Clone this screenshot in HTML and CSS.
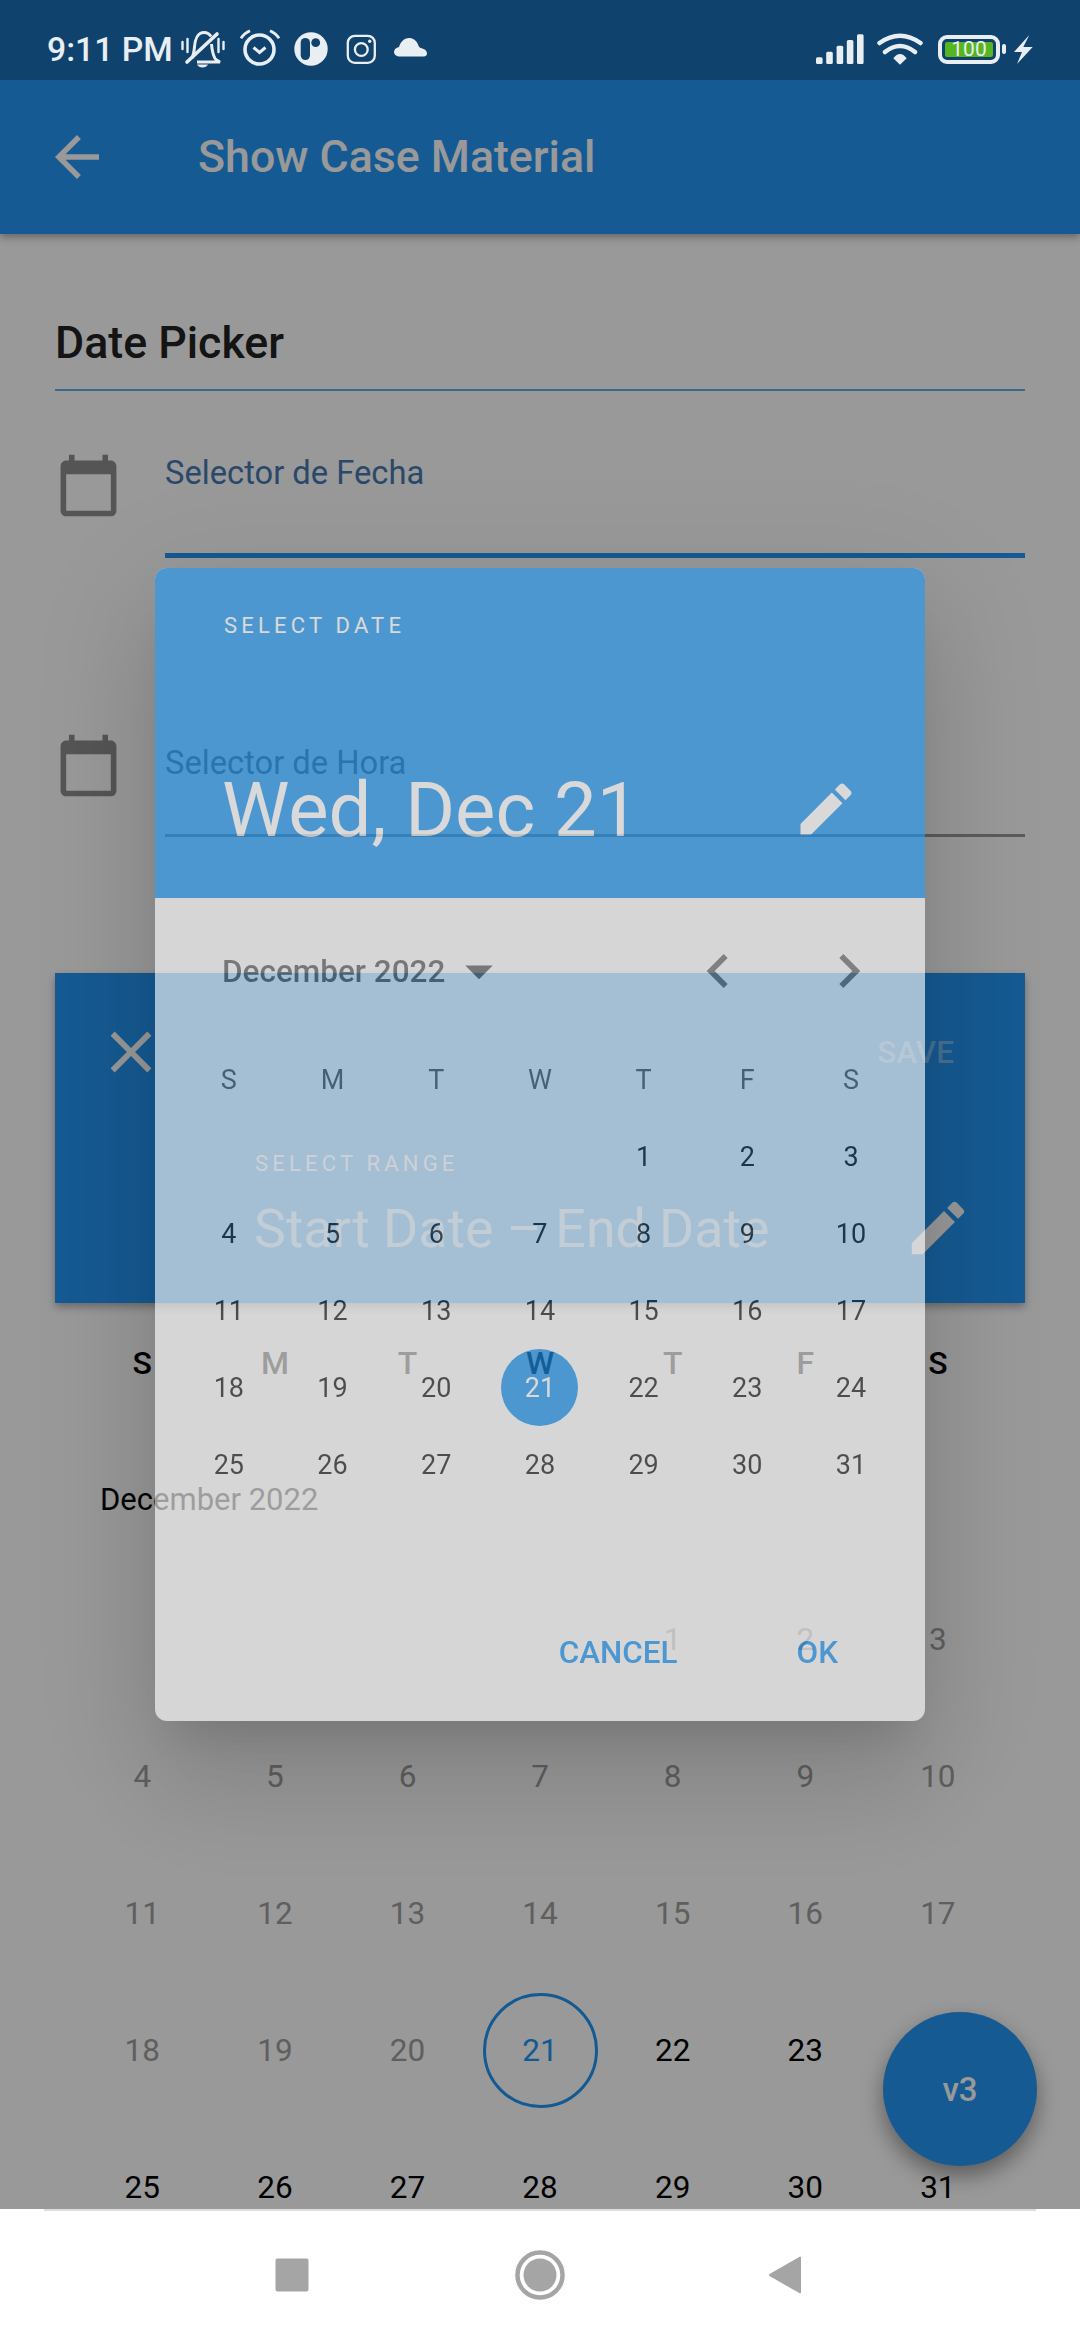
FILE: index.html
```html
<!DOCTYPE html>
<html lang="en">
<head>
<meta charset="utf-8">
<title>Show Case Material</title>
<link rel="stylesheet" href="styles.css">
</head>
<body>
<div class="screen">
  <div class="main">
    <div class="status">
      <span class="time">9:11 PM</span>
      <svg class="si bell" viewBox="0 0 44 38" fill="none" stroke="#e9eef2"><path d="M11 28c1.500-3 2-6 2.500-11C14 9 17 2.500 23 2.500c3 0 5.500 1.500 7 4" stroke-width="3"/><path d="M30.500 14c.5 6 1 10 3.500 14.500 1 1.500 3 2.500 5 3.500H16" stroke-width="3"/><path d="M6 32 36 4" stroke-width="3.600" stroke-linecap="round"/><path d="M1.500 12v7M6.500 9v13M37.500 9v13M42.500 12v7" stroke-width="2.400" stroke-linecap="round"/><path d="M16 34.500h11c-1 2-3 3-5.500 3s-4.500-1-5.500-3z" fill="#e9eef2" stroke="none"/></svg>
      <svg class="si alarm" viewBox="0 0 40 40" fill="none" stroke="#e9eef2"><circle cx="19.500" cy="20.500" r="14.500" stroke-width="3.600"/><path d="M13.500 18.500l6 5 6-5" stroke-width="3"/><path d="M1 9.300C3 6 6 3.500 10 1.700M30 1.700C34 3.500 37 6 39 9.300" stroke-width="2.800"/></svg>
      <svg class="si pcirc" viewBox="0 0 34 34"><circle cx="17" cy="17" r="16.700" fill="#e9eef2"/><rect x="6.700" y="6" width="9.300" height="22" rx="4.650" fill="#10426e"/><circle cx="21.700" cy="10.700" r="4.400" fill="#10426e"/></svg>
      <svg class="si insta" viewBox="0 0 31 31" fill="none" stroke="#e9eef2" stroke-width="2.300"><rect x="1.800" y="1.800" width="27" height="27" rx="7"/><circle cx="15.300" cy="15.500" r="6.400"/><circle cx="23.700" cy="7.200" r="1.700" fill="#e9eef2" stroke="none"/></svg>
      <svg class="si cloud" viewBox="0 0 33 19"><path d="M6 18.500C2.500 18.500 0 16.500 0 14s2-4.500 5-5C6.500 4 10 0 15 0c4 0 7.500 2.500 9 6.500.5 1.500 1 2.500 2.500 3.500 3.500.5 6.500 2.500 6.500 5.500 0 2-1.500 3-3 3z" fill="#e9eef2"/></svg>
      <span class="status-gap"></span>
      <svg class="si signal" viewBox="0 0 48 30" fill="#e9eef2"><rect x="0" y="23.300" width="6.600" height="6.700" rx="1.500"/><rect x="10.200" y="17.700" width="6.600" height="12.300" rx="1.500"/><rect x="20.600" y="11.700" width="6.600" height="18.300" rx="1.500"/><rect x="30.800" y="6" width="6.600" height="24" rx="1.500"/><rect x="41" y=".3" width="6.600" height="29.700" rx="1.500"/></svg>
      <svg class="si wifi" viewBox="0 0 46 34" fill="none" stroke="#e9eef2" stroke-width="4.500" stroke-linecap="round"><path d="M2.500 11Q23-3.600 43.500 11M8 20Q23 8 38 20"/><path d="M16.300 26.300Q23 17.700 29.700 26.300L23 32.700z" fill="#e9eef2" stroke="none"/></svg>
      <span class="battery"><span class="level">100</span></span>
      <span class="tip"></span>
      <svg class="si bolt" viewBox="0 0 19 29"><path d="M15.300 0 0 17h8L3 29l15.700-17H9.300z" fill="#e9eef2"/></svg>
    </div>
    <header class="appbar">
      <svg class="ic arrow" viewBox="0 0 24 24"><path d="M20 11H7.830l5.590-5.590L12 4l-8 8 8 8 1.410-1.410L7.830 13H20v-2z"/></svg>
      <span class="apptitle">Show Case Material</span>
    </header>
    <section class="content">
      <h1 class="section-title">Date Picker</h1>
      <div class="field field-first">
        <svg class="ic cal" viewBox="0 0 24 24"><path d="M20 3h-1V1h-2v2H7V1H5v2H4c-1.100 0-2 .9-2 2v16c0 1.100.9 2 2 2h16c1.100 0 2-.9 2-2V5c0-1.100-.9-2-2-2zm0 18H4V8h16v13z"/></svg>
        <div class="input input-on">Selector de Fecha</div>
      </div>
      <div class="field field-second">
        <svg class="ic cal" viewBox="0 0 24 24"><path d="M20 3h-1V1h-2v2H7V1H5v2H4c-1.100 0-2 .9-2 2v16c0 1.100.9 2 2 2h16c1.100 0 2-.9 2-2V5c0-1.100-.9-2-2-2zm0 18H4V8h16v13z"/></svg>
        <div class="input">Selector de Hora</div>
      </div>
      <div class="card">
        <div class="card-top">
          <svg class="ic close" viewBox="0 0 24 24"><path d="M19 6.410 17.590 5 12 10.590 6.410 5 5 6.410 10.590 12 5 17.590 6.410 19 12 13.410 17.590 19 19 17.590 13.410 12z"/></svg>
          <span class="save">SAVE</span>
        </div>
        <div class="range-label">SELECT RANGE</div>
        <div class="range-row">
          <span class="range-text">Start Date – End Date</span>
          <svg class="ic pencil" viewBox="0 0 24 24"><path d="M3 17.250V21h3.750L17.810 9.940l-3.750-3.750L3 17.250zM20.710 7.040c.39-.39.39-1.020 0-1.410l-2.340-2.340c-.39-.39-1.020-.39-1.410 0l-1.830 1.830 3.750 3.750 1.830-1.830z"/></svg>
        </div>
      </div>
      <div class="week"><span>S</span><span>M</span><span>T</span><span>W</span><span>T</span><span>F</span><span>S</span></div>
      <div class="month">December 2022</div>
      <div class="days">
        <span></span><span></span><span></span><span></span><span class="past">1</span><span class="past">2</span><span class="past">3</span>
        <span class="past">4</span><span class="past">5</span><span class="past">6</span><span class="past">7</span><span class="past">8</span><span class="past">9</span><span class="past">10</span>
        <span class="past">11</span><span class="past">12</span><span class="past">13</span><span class="past">14</span><span class="past">15</span><span class="past">16</span><span class="past">17</span>
        <span class="past">18</span><span class="past">19</span><span class="past">20</span><span class="today"><i>21</i></span><span>22</span><span>23</span><span>24</span>
        <span>25</span><span>26</span><span>27</span><span>28</span><span>29</span><span>30</span><span>31</span>
      </div>
    </section>
    <div class="fab">v3</div>
    <div class="scrim"></div>
    <div class="dialog">
      <div class="dlg-head">
        <div class="dlg-label">SELECT DATE</div>
        <div class="dlg-date">
          <span class="dlg-big">Wed, Dec 21</span>
          <svg class="ic pencil dlg-pencil" viewBox="0 0 24 24"><path d="M3 17.250V21h3.750L17.810 9.940l-3.750-3.750L3 17.250zM20.710 7.040c.39-.39.39-1.020 0-1.410l-2.340-2.340c-.39-.39-1.020-.39-1.410 0l-1.830 1.830 3.750 3.750 1.830-1.830z"/></svg>
        </div>
      </div>
      <div class="dlg-body">
        <div class="dlg-month">
          <span class="dlg-month-name">December 2022</span>
          <svg class="ic drop" viewBox="0 0 24 24"><path d="M7 10l5 5 5-5z"/></svg>
          <span class="grow"></span>
          <svg class="ic chev" viewBox="0 0 24 24"><path d="M15.410 7.410 14 6l-6 6 6 6 1.410-1.410L10.830 12z"/></svg>
          <svg class="ic chev" viewBox="0 0 24 24"><path d="M10 6 8.590 7.410 13.170 12l-4.580 4.580L10 18l6-6z"/></svg>
        </div>
        <div class="dlg-grid">
          <b>S</b><b>M</b><b>T</b><b>W</b><b>T</b><b>F</b><b>S</b>
          <span></span><span></span><span></span><span></span><span>1</span><span>2</span><span>3</span>
          <span>4</span><span>5</span><span>6</span><span>7</span><span>8</span><span>9</span><span>10</span>
          <span>11</span><span>12</span><span>13</span><span>14</span><span>15</span><span>16</span><span>17</span>
          <span>18</span><span>19</span><span>20</span><span class="sel">21</span><span>22</span><span>23</span><span>24</span>
          <span>25</span><span>26</span><span>27</span><span>28</span><span>29</span><span>30</span><span>31</span>
        </div>
        <div class="dlg-actions"><span>CANCEL</span><span>OK</span></div>
      </div>
    </div>
  </div>
  <nav class="nav">
    <svg class="nav-ic" viewBox="0 0 50 50"><rect x="5.500" y="8.500" width="33" height="33" rx="2" fill="#a5a5a5"/></svg>
    <svg class="nav-ic" viewBox="0 0 50 50"><circle cx="25" cy="25" r="22.500" fill="none" stroke="#a5a5a5" stroke-width="4.500"/><circle cx="25" cy="25" r="16.500" fill="#a5a5a5"/></svg>
    <svg class="nav-ic" viewBox="0 0 50 50"><path d="M41 7.500v35a1 1 0 0 1-1.700.6L9.500 26a1.500 1.500 0 0 1 0-2L39.300 6.900A1 1 0 0 1 41 7.500z" fill="#a5a5a5"/></svg>
  </nav>
</div>
</body>
</html>
```
FILE: styles.css
```css
* { box-sizing: border-box; }
html, body { margin: 0; padding: 0; }
body { width: 1080px; height: 2340px; overflow: hidden; background: #fff; font-family: Roboto, "Noto Sans", sans-serif; }
.screen { width: 1080px; height: 2340px; display: flex; flex-direction: column; }
.main { position: relative; height: 2209px; overflow: hidden; background: #fff; }

.status { position: relative; z-index: 3; height: 80px; background: #10426e; display: flex; align-items: center; padding: 18px 0 0 47px; }
.time { color: #e9eef2; font-size: 33.700px; font-weight: 500; width: 134px; white-space: nowrap; }
.si { display: block; flex: none; }
.bell { width: 44px; height: 38px; }
.alarm { width: 40px; height: 40px; margin-left: 15px; }
.pcirc { width: 34px; height: 34px; margin-left: 14px; }
.insta { width: 31px; height: 31px; margin-left: 18px; }
.cloud { width: 33px; height: 19px; margin-left: 17px; margin-top: -3px; }
.status-gap { flex: 1; }
.signal { width: 48px; height: 30px; }
.wifi { width: 46px; height: 34px; margin-left: 13px; }
.battery { width: 62px; height: 29px; margin-left: 15px; border: 4px solid #e9eef2; border-radius: 9px; padding: 3px; }
.level { display: block; height: 15px; background: #56b520; border-radius: 2px; color: #e9eef2; font-size: 21px; line-height: 15px; text-align: center; }
.tip { width: 4px; height: 10px; margin-left: 2px; background: #e9eef2; border-radius: 2px; }
.bolt { width: 19px; height: 29px; margin-left: 8px; margin-right: 47px; }

.ic { display: block; flex: none; fill: currentColor; }

.appbar { height: 154px; background: #2396f6; display: flex; align-items: center; padding-left: 44px; box-shadow: 0 3px 8px rgba(0,0,0,.35); position: relative; color: #fff; }
.arrow { width: 66px; height: 66px; }
.apptitle { margin-left: 88px; font-size: 44.700px; font-weight: 500; }

.content { padding: 0 55px; }
.section-title { margin: 0; height: 157px; padding-top: 79px; font-size: 44.700px; line-height: 60px; font-weight: 500; color: #222; border-bottom: 2px solid #5fb0ee; }
.field { display: flex; }
.field .cal { width: 67px; height: 67px; margin: 0; color: #8e8e8e; }
.field-first { margin-top: 61px; height: 106px; }
.field-second { margin-top: 175px; height: 104px; }
.input { flex: 1; margin-left: 43px; font-size: 32.700px; line-height: 40px; color: #666; border-bottom: 3px solid #999; }
.field-first .input { padding-top: 1px; height: 106px; color: #467bb1; border-bottom: 5px solid #2396f6; }
.field-second .cal { margin-top: -1px; }
.field-second .input { padding-top: 10px; height: 104px; }

.card { margin-top: 136px; height: 330px; background: #2396f6; color: #fff; box-shadow: 0 4px 8px rgba(0,0,0,.3); }
.card-top { padding: 44px 71px 0 41px; display: flex; justify-content: space-between; align-items: center; }
.close { width: 70px; height: 70px; }
.save { font-size: 31.500px; font-weight: 500; color: rgba(255,255,255,.38); }
.range-label { margin: 67px 0 0 200px; font-size: 22px; line-height: 20px; letter-spacing: 4.200px; color: rgba(255,255,255,.8); }
.range-row { margin-top: 14px; height: 80px; padding: 0 52px 0 199px; display: flex; justify-content: space-between; align-items: center; }
.range-text { font-size: 53.700px; color: rgba(255,255,255,.6); }
.pencil { width: 70px; height: 70px; }

.week, .days { display: grid; grid-template-columns: repeat(7, 132.6px); padding-left: 21px; }
.week { margin-top: 30px; height: 60px; align-items: center; }
.week span { text-align: center; font-size: 32px; font-weight: 500; color: #000; }
.month { margin: 87px 0 0 45px; font-size: 31px; line-height: 40px; color: #000; }
.days { margin-top: 51px; grid-auto-rows: 137px; }
.days span { display: flex; align-items: center; justify-content: center; font-size: 31.500px; color: #000; }
.days .past { color: #9e9e9e; }
.days .today i { font-style: normal; width: 115px; height: 115px; display: flex; align-items: center; justify-content: center; border: 3px solid #2196f3; border-radius: 50%; color: #2196f3; }

.fab { position: absolute; z-index: 1; left: 883px; top: 2012px; width: 154px; height: 154px; border-radius: 50%; background: #2396f6; color: #fff; font-size: 33px; font-weight: 500; display: flex; align-items: center; justify-content: center; box-shadow: 0 10px 22px rgba(0,0,0,.4); }
.scrim { position: absolute; z-index: 2; inset: 0; background: rgba(0,0,0,.4); }

.dialog { position: absolute; z-index: 4; left: 155px; top: 568px; width: 770px; height: 1153px; border-radius: 12px; overflow: hidden; opacity: .63; background: #fbfbfb; display: flex; flex-direction: column; box-shadow: 0 66px 105px 8px rgba(0,0,0,.14), 0 25px 126px 22px rgba(0,0,0,.12), 0 30px 41px -19px rgba(0,0,0,.2); }
.dlg-head { height: 330px; flex: none; background: #2196f3; color: #fff; padding: 48px 0 0 69px; }
.dlg-label { font-size: 22px; line-height: 20px; letter-spacing: 4.200px; }
.dlg-date { margin-top: 124px; height: 100px; padding-right: 65px; display: flex; align-items: center; justify-content: space-between; }
.dlg-big { font-size: 76px; margin-left: -2px; }
.dlg-pencil { width: 68px; height: 68px; margin-top: -2px; }
.dlg-body { flex: 1; display: flex; flex-direction: column; }
.dlg-month { margin-top: 33px; height: 80px; padding: 0 42px 0 67px; display: flex; align-items: center; }
.dlg-month-name { font-size: 31.500px; font-weight: 500; color: rgba(0,0,0,.6); }
.drop { width: 66px; height: 66px; color: rgba(0,0,0,.6); margin-left: 1px; }
.grow { flex: 1; }
.chev { width: 68px; height: 68px; color: rgba(0,0,0,.55); }
.chev + .chev { margin-left: 63px; }
.dlg-grid { margin-top: 30px; padding-left: 22px; display: grid; grid-template-columns: repeat(7, 103.700px); grid-auto-rows: 77px; }
.dlg-grid b, .dlg-grid span { display: flex; align-items: center; justify-content: center; font-size: 27px; font-weight: 400; color: rgba(0,0,0,.87); }
.dlg-grid b { color: rgba(0,0,0,.6); }
.dlg-grid .sel { background: #2196f3; color: #fff; border-radius: 50%; width: 77px; height: 77px; justify-self: center; }
.dlg-actions { margin-top: auto; padding: 0 87px 48px 0; display: flex; justify-content: flex-end; gap: 119px; font-size: 31.400px; line-height: 40px; font-weight: 500; color: #2196f3; }

.nav { flex: 1; background: #fff; position: relative; display: flex; align-items: center; justify-content: center; gap: 195px; }
.nav::before { content: ""; position: absolute; left: 44px; right: 44px; top: 0; height: 2px; background: #ddd; }
.nav-ic { width: 50px; height: 50px; display: block; }
```
